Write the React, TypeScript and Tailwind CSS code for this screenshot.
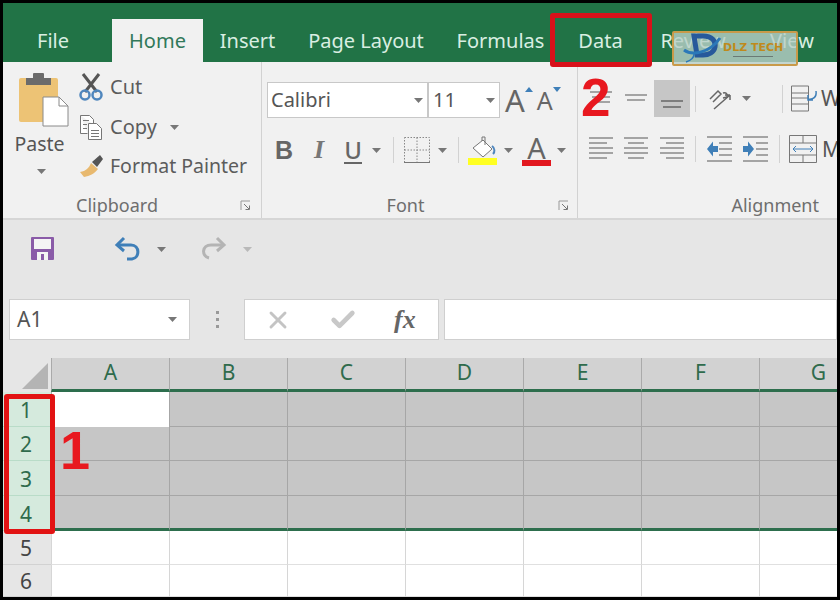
import type { ReactNode } from 'react'
import { Check, X } from 'lucide-react'

const font = "font-['Noto_Sans','Open_Sans',sans-serif]"

const tabs = [
  { label: 'File', w: 'w-[109px] pr-[9px]' },
  { label: 'Home', w: 'w-[91px]', active: true },
  { label: 'Insert', w: 'w-[89px]' },
  { label: 'Page Layout', w: 'w-[148px]' },
  { label: 'Formulas', w: 'w-[121px]' },
  { label: 'Data', w: 'w-[79px]' },
  { label: 'Review', w: 'w-[106px]' },
  { label: 'View', w: 'w-[92px]' },
]

const columns = ['A', 'B', 'C', 'D', 'E', 'F', 'G']
const rows = [
  { n: 1, h: 'h-[35px]' },
  { n: 2, h: 'h-[34px]' },
  { n: 3, h: 'h-[35px]' },
  { n: 4, h: 'h-[35px]' },
  { n: 5, h: 'h-[34px]' },
  { n: 6, h: 'h-[32px]' },
]

function Caret({ className = '' }: { className?: string }) {
  return (
    <svg width="9" height="5" viewBox="0 0 9 5" className={className}>
      <path d="M0 0h9L4.5 5z" fill="#777" />
    </svg>
  )
}

function Launcher({ className = '' }: { className?: string }) {
  return (
    <svg width="11" height="11" viewBox="0 0 11 11" className={className} fill="none">
      <path d="M10 1H1v9" stroke="#999" />
      <path d="M4 4l5 5M5.5 9.5h4v-4" stroke="#777" />
    </svg>
  )
}

function Lines({ lines, selected }: { lines: [number, number, number][]; selected?: boolean }) {
  return (
    <svg width="26" height="26" viewBox="0 0 26 26">
      {lines.map(([y, x1, x2]) => (
        <line key={y} x1={x1} x2={x2} y1={y} y2={y} stroke={selected ? '#666' : '#8a8a8a'} strokeWidth="1.5" />
      ))}
    </svg>
  )
}

function Indent({ right }: { right?: boolean }) {
  return (
    <svg width="27" height="28" viewBox="0 0 27 28">
      {[2, 26].map(y => (
        <line key={y} x1="1" x2="26" y1={y} y2={y} stroke="#8a8a8a" strokeWidth="1.5" />
      ))}
      {[8, 14, 20].map(y => (
        <line key={y} x1={right ? 14 : 13} x2="26" y1={y} y2={y} stroke="#8a8a8a" strokeWidth="1.5" />
      ))}
      <path d={right ? 'M1 11h5V6.500l6 7.500-6 7.500V17H1z' : 'M12 11H7V6.500L1 14l6 7.500V17h5z'} fill="#3f7fb8" />
    </svg>
  )
}

function Group({ width, label, labelClass, children, launcher, last }: { width: string; label: string; labelClass: string; children: ReactNode; launcher?: string; last?: boolean }) {
  return (
    <div className={`${width} flex h-full shrink-0 flex-col ${last ? '' : 'border-r border-[#d2d2d2]'}`}>
      <div className="h-[131px] shrink-0 overflow-hidden">{children}</div>
      <div className="relative">
        <div className={`flex h-[25px] items-center text-[18px] text-[#6e6e6e] ${labelClass}`}>{label}</div>
        {launcher && <Launcher className={`absolute top-[7px] ${launcher}`} />}
      </div>
    </div>
  )
}

function Clipboard() {
  return (
    <div className="flex pl-[15px] pt-[9px]">
      <div className="flex w-[61px] shrink-0 flex-col items-center">
        <svg width="52" height="56" viewBox="0 0 52 56" className="self-start">
          <rect x="1" y="7" width="39" height="44" rx="2" fill="#edc375" />
          <rect x="8" y="7" width="25" height="7" fill="#6b6b6b" />
          <rect x="15" y="2" width="11" height="7" rx="1" fill="#6b6b6b" />
          <path d="M25 26h16l9 9v20H25z" fill="#fff" stroke="#8a8a8a" />
          <path d="M41 26v9h9" fill="none" stroke="#8a8a8a" />
        </svg>
        <span className="mr-[18px] mt-[3px] text-[19.500px] leading-[28px] text-[#555]">Paste</span>
        <Caret className="mr-[14px] mt-[11px]" />
      </div>
      <div className="-mt-[2px] flex shrink-0 flex-col text-[#5c5c5c]">
        <div className="flex h-[36px] items-center gap-[7px]">
          <svg width="24" height="28" viewBox="0 0 24 28" fill="none">
            <path d="M4 1l14 18M20 1L6 19" stroke="#555" strokeWidth="3" />
            <circle cx="6" cy="22" r="4.500" stroke="#4f86bd" strokeWidth="2.500" />
            <circle cx="18" cy="22" r="4.500" stroke="#4f86bd" strokeWidth="2.500" />
          </svg>
          <span className="text-[20px] leading-none">Cut</span>
        </div>
        <div className="mt-[4px] flex h-[36px] items-center gap-[7px]">
          <svg width="24" height="28" viewBox="0 0 24 28" fill="none" stroke="#777">
            <path d="M1.500 2.500h9l4 4v5M1.500 2.500v18h7" fill="#fff" />
            <path d="M9.500 10.500h8l5 5v11h-13z" fill="#fff" />
            <path d="M4 7.500h6M4 11.500h4M4 15.500h4M12 17.500h8M12 20.500h8M12 23.500h8" />
          </svg>
          <span className="text-[20px] leading-none">Copy</span>
          <Caret className="ml-[6px]" />
        </div>
        <div className="mt-[3px] flex h-[36px] items-center gap-[6px]">
          <svg width="25" height="26" viewBox="0 0 25 26">
            <path d="M1 19c6-1 9-4 11-9l7 6c-4 5-8 7-14 8z" fill="#e8b96f" />
            <path d="M13 9l8-7 3 4-6 8z" fill="#555" />
          </svg>
          <span className="whitespace-nowrap text-[19.500px] leading-none">Format Painter</span>
        </div>
      </div>
    </div>
  )
}

function Combo({ value, width, textClass }: { value: string; width: string; textClass: string }) {
  return (
    <div className={`${width} flex h-[36px] shrink-0 items-center justify-between border border-[#c8c8c8] bg-white ${textClass}`}>
      <span className="text-[20px] leading-none text-[#555]">{value}</span>
      <Caret className="mr-[4px]" />
    </div>
  )
}

function FontGroup() {
  return (
    <div className="pl-[5px] pt-[20px]">
      <div className="flex items-center">
        <Combo value="Calibri" width="w-[161px]" textClass="pl-[3px]" />
        <Combo value="11" width="w-[72px]" textClass="pl-[4px]" />
        <div className="ml-[5px] flex h-[36px] items-center text-[#666]">
          <span className="text-[31px] leading-none">A</span>
          <svg width="8" height="5" viewBox="0 0 8 5" className="mb-[22px]">
            <path d="M4 0l4 5H0z" fill="#3f7fb8" />
          </svg>
          <span className="ml-[4px] text-[25px] leading-none">A</span>
          <svg width="8" height="5" viewBox="0 0 8 5" className="mb-[22px]">
            <path d="M4 5l4-5H0z" fill="#3f7fb8" />
          </svg>
        </div>
      </div>
      <div className="mt-[15px] flex h-[34px] items-center text-[#666]">
        <span className="ml-[8px] font-['Liberation_Sans',sans-serif] text-[25px] font-bold leading-none">B</span>
        <span className="ml-[21px] font-['Liberation_Serif',serif] text-[26px] font-bold italic leading-none text-[#777]">I</span>
        <span className="ml-[20px] border-b-2 border-[#666] text-[24px] font-medium leading-[25px]">U</span>
        <Caret className="ml-[10px]" />
        <div className="ml-[12px] h-[26px] w-px bg-[#d2d2d2]" />
        <svg width="26" height="27" viewBox="0 0 26 27" className="ml-[10px]" fill="none">
          <path d="M.5.500h25v25H.5zM13 .500v25M.5 13h25" stroke="#888" strokeDasharray="1.500 1.500" />
          <path d="M0 25.500h26" stroke="#777" />
        </svg>
        <Caret className="ml-[8px]" />
        <div className="ml-[11px] h-[26px] w-px bg-[#d2d2d2]" />
        <svg width="30" height="30" viewBox="0 0 30 30" className="ml-[9px]" fill="none">
          <path d="M5 13L15 5l9 9-9 8z" fill="#fff" stroke="#777" />
          <path d="M14 6V2h3v8" stroke="#777" />
          <path d="M24 11c3 2 3 6 1 8" stroke="#4f86bd" strokeWidth="2" />
          <rect y="23" width="29" height="7" fill="#ffff22" />
        </svg>
        <Caret className="ml-[6px]" />
        <div className="ml-[9px] flex flex-col items-center">
          <span className="text-[29px] leading-[25px] text-[#666]">A</span>
          <div className="h-[6px] w-[29px] bg-[#e2181f]" />
        </div>
        <Caret className="ml-[6px]" />
      </div>
    </div>
  )
}

function Alignment() {
  return (
    <div className="pl-[6px] pt-[18px]">
      <div className="flex h-[37px] items-center *:shrink-0">
        <div className="flex w-[34px] justify-center"><Lines lines={[[6, 2, 24], [11, 4, 22], [16, 4, 22]]} /></div>
        <div className="flex w-[36px] justify-center"><Lines lines={[[9, 2, 24], [14, 4, 22]]} /></div>
        <div className="flex h-[37px] w-[36px] items-center justify-center bg-[#c6c6c6]">
          <Lines selected lines={[[15, 2, 24], [21, 4, 22]]} />
        </div>
        <div className="ml-[5px] h-[26px] w-px bg-[#d2d2d2]" />
        <svg width="25" height="24" viewBox="0 0 25 24" className="ml-[12px]" fill="none" stroke="#666">
          <path d="M2 12L10 4l3 3-8 8M15 6c3-1 5 1 4 4l-4 1" strokeWidth="1.500" />
          <path d="M6 22L22 8M22 8h-5M22 8v5" strokeWidth="1.500" />
        </svg>
        <Caret className="ml-[9px]" />
        <div className="ml-[31px] h-[28px] w-px bg-[#d2d2d2]" />
        <svg width="27" height="27" viewBox="0 0 27 27" className="ml-[8px]" fill="none">
          <path d="M.5 1h17v25H.5zM.5 8h17M.5 13h17M.5 19h17" stroke="#777" />
          <path d="M25 6c1 6-3 9-8 8M17 10v5h5" stroke="#3f7fb8" strokeWidth="1.500" />
        </svg>
        <span className="ml-[3px] text-[21px] leading-none text-[#555]">W</span>
      </div>
      <div className="mt-[14px] flex h-[36px] items-center *:shrink-0">
        <div className="flex w-[34px] justify-center"><Lines lines={[[2, 1, 25], [7, 1, 19], [12, 1, 25], [17, 1, 25], [22, 1, 19]]} /></div>
        <div className="flex w-[36px] justify-center"><Lines lines={[[2, 1, 25], [7, 5, 21], [12, 1, 25], [17, 1, 25], [22, 5, 21]]} /></div>
        <div className="flex w-[36px] justify-center"><Lines lines={[[2, 1, 25], [7, 7, 25], [12, 1, 25], [17, 1, 25], [22, 7, 25]]} /></div>
        <div className="ml-[5px] h-[26px] w-px bg-[#d2d2d2]" />
        <div className="ml-[10px]"><Indent /></div>
        <div className="ml-[9px]"><Indent right /></div>
        <div className="ml-[10px] h-[28px] w-px bg-[#d2d2d2]" />
        <svg width="28" height="28" viewBox="0 0 28 28" className="ml-[9px]" fill="none">
          <path d="M.5.500h27v27H.5zM.5 8h27M.5 20h27M14 .500V8M14 20v8" stroke="#777" />
          <path d="M4 14h20M7 11l-3 3 3 3M21 11l3 3-3 3" stroke="#3f7fb8" />
        </svg>
        <span className="ml-[5px] text-[21px] leading-none text-[#555]">M</span>
      </div>
    </div>
  )
}

function cellClass(n: number, i: number) {
  const active = n === 1 && i === 0
  if (n === 4) return 'border-b-[3px] border-b-[#2d6e4d] border-l-[#a6a6a6] bg-[#c6c6c6]'
  if (active) return 'border-b border-b-white border-l-[#aaa] bg-white'
  if (n < 4) return 'border-b border-b-[#a6a6a6] border-l-[#a6a6a6] bg-[#c6c6c6]'
  return 'border-b border-b-[#e0e0e0] border-l-[#d6d6d6] bg-white'
}

function Sheet() {
  return (
    <div className="bg-white">
      <div className="flex h-[34px] bg-[#d2d2d2]">
        <div className="flex w-[48px] shrink-0 items-end justify-end bg-[#e6e6e6] pb-[3px] pr-[3px]">
          <div className="h-[26px] w-[26px] bg-[#b4b4b4] [clip-path:polygon(100%_0,100%_100%,0_100%)]" />
        </div>
        {columns.map(c => (
          <div key={c} className="flex w-[118px] shrink-0 items-center justify-center border-b-[3px] border-l border-b-[#2d6e4d] border-l-[#aaa] pb-[1px] text-[21px] text-[#2f6b4c]">
            {c}
          </div>
        ))}
      </div>
      {rows.map(r => (
        <div key={r.n} className={`flex ${r.h}`}>
          <div className={`flex w-[48px] shrink-0 items-center justify-center border-b pr-[2px] pt-[3px] text-[21px] ${r.n <= 4 ? 'border-[#b9dcc8] bg-[#d5eadd] text-[#2f6b4c]' : 'border-[#d2d2d2] bg-[#e6e6e6] text-[#444]'}`}>
            {r.n}
          </div>
          {columns.map((c, i) => (
            <div key={c} className={`w-[118px] shrink-0 border-l ${cellClass(r.n, i)}`} />
          ))}
        </div>
      ))}
    </div>
  )
}

export default function App() {
  return (
    <div className={`relative h-[600px] w-[840px] overflow-hidden bg-black p-[3px] ${font}`}>
      <div className="h-[594px] w-[834px] overflow-hidden bg-[#e6e6e6]">
        <div className="flex h-[59px] items-end bg-[#217346]">
          {tabs.map(t => (
            <div
              key={t.label}
              className={`${t.w} flex h-[43px] shrink-0 items-center justify-center text-[20px] ${
                t.active ? 'bg-[#f1f1f1] text-[#31795a]' : 'text-[#d9eee2]'
              }`}
            >
              {t.label}
            </div>
          ))}
        </div>

        <div className="flex h-[158px] border-b-2 border-[#d6d6d6] bg-[#f1f1f1]">
          <Group width="w-[259px]" label="Clipboard" labelClass="justify-center pr-[30px]" launcher="left-[237px]">
            <Clipboard />
          </Group>
          <Group width="w-[316px]" label="Font" labelClass="justify-center pr-[28px]" launcher="left-[296px]">
            <FontGroup />
          </Group>
          <Group width="w-[259px]" label="Alignment" labelClass="justify-end pr-[18px]" last>
            <Alignment />
          </Group>
        </div>

        <div className="flex h-[63px] items-center bg-[#e6e6e6] pb-[5px]">
          <svg width="24" height="24" viewBox="0 0 24 24" className="ml-[28px]">
            <rect width="23" height="23" rx="1" fill="#8a5ba8" />
            <rect x="3" y="2" width="17" height="10" fill="#f4f4f4" />
            <rect x="6" y="15" width="11" height="8" fill="#f4f4f4" />
            <rect x="10" y="17" width="3" height="6" fill="#8a5ba8" />
          </svg>
          <svg width="28" height="26" viewBox="0 0 28 26" className="ml-[59px]" fill="none">
            <path d="M10 2L3 9l7 6" stroke="#3f7fb8" strokeWidth="3" />
            <path d="M4 9h13c9 0 9 13 1 14h-5" stroke="#3f7fb8" strokeWidth="3" />
          </svg>
          <Caret className="ml-[15px]" />
          <svg width="28" height="26" viewBox="0 0 28 26" className="ml-[33px]" fill="none">
            <path d="M18 2l7 7-7 6" stroke="#b4b4b4" strokeWidth="3" />
            <path d="M24 9H12c-9 0-10 11-2 13" stroke="#b4b4b4" strokeWidth="3" />
          </svg>
          <Caret className="ml-[16px] opacity-40" />
        </div>

        <div className="flex h-[75px] items-start bg-[#e6e6e6] pl-[6px] pt-[16px]">
          <div className="flex h-[41px] w-[181px] items-center justify-between border border-[#cfcfcf] bg-white pl-[7px] pr-[12px]">
            <span className="text-[21px] leading-none text-[#555]">A1</span>
            <Caret />
          </div>
          <div className="flex h-[41px] w-[54px] flex-col items-center justify-center gap-[4px]">
            <div className="h-[3px] w-[3px] bg-[#999]" />
            <div className="h-[3px] w-[3px] bg-[#999]" />
            <div className="h-[3px] w-[3px] bg-[#999]" />
          </div>
          <div className="flex h-[41px] w-[195px] items-center border border-[#cfcfcf] bg-white">
            <X size={28} strokeWidth={2.5} className="ml-[19px] text-[#c4c4c4]" />
            <Check size={28} strokeWidth={4} className="ml-[37px] text-[#c8c8c8]" />
            <span className="ml-[37px] font-['Liberation_Serif',serif] text-[26px] font-bold italic leading-none text-[#666]">fx</span>
          </div>
          <div className="ml-[5px] h-[41px] flex-1 border border-[#cfcfcf] bg-white" />
        </div>

        <Sheet />
      </div>

      {/* annotations on top of the screenshot */}
      <div className="absolute left-[4px] top-[394px] h-[140px] w-[51px] rounded-[3px] border-[5px] border-[#e21313]" />
      <div className="absolute left-[550px] top-[13px] h-[54px] w-[102px] rounded-[3px] border-[5px] border-[#d8111a]" />
      <span className="absolute left-[60px] top-[418px] font-['Liberation_Sans',sans-serif] text-[54px] font-bold leading-[64px] text-[#e8181f]">1</span>
      <span className="absolute left-[581px] top-[70px] font-['Liberation_Sans',sans-serif] text-[53px] font-bold leading-[56px] text-[#e8181f]">2</span>

      <div className="absolute left-[672px] top-[31px] flex h-[35px] w-[126px] items-center rounded-[2px] border-2 border-[#c89a4a] bg-[#b9d0c8]/80">
        <svg width="46" height="32" viewBox="0 0 42 32" className="ml-[6px] shrink-0" fill="none">
          <path d="M12 3h9c9 0 13 5 12 11-1 5-6 8-12 8h-6z" stroke="#27599b" strokeWidth="5" />
          <path d="M2 17c8 6 26 3 36-12" stroke="#2b78b8" strokeWidth="3" />
          <path d="M4 29c6-2 8-5 8-8" stroke="#2b78b8" strokeWidth="1.500" />
        </svg>
        <div className="-ml-[3px] flex flex-col items-center">
          <span className="whitespace-nowrap font-['DejaVu_Sans',sans-serif] text-[11px] font-bold leading-[13px] text-[#bf8a1c]">DLZ TECH</span>
          <div className="mt-[2px] h-px w-[40px] bg-[#6a7a76]" />
        </div>
      </div>
    </div>
  )
}
